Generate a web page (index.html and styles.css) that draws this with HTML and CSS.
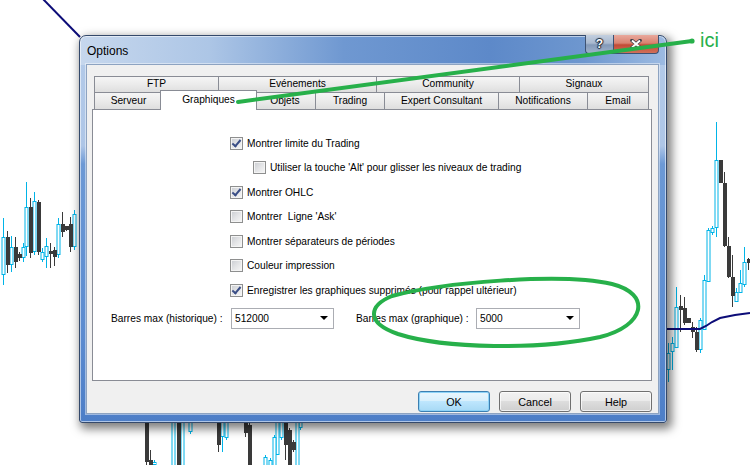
FILE: index.html
```html
<!DOCTYPE html>
<html lang="fr">
<head>
  <meta charset="UTF-8" />
  <title>Options</title>
  <link rel="stylesheet" href="styles.css">
</head>
<body>

  <svg class="chart" id="chart" width="750" height="465" viewBox="0 0 750 465">
    <path class="ma" d="M42 -2 L80 37" />
    <path class="ma" d="M664 329 L700 329 L706 326 L712 322 L720 318 L735 315 L750 313" />
  </svg>

  <div class="window">
    <div class="titlebar">
      <span class="title">Options</span>
      <div class="caption-btns">
        <span class="cbtn help">?</span>
        <span class="cbtn close">
          <svg width="12" height="10" viewBox="0 0 12 10">
            <path d="M2 1.5 L10 8.5 M10 1.5 L2 8.5" stroke="#3a3f4a" stroke-width="3.6" stroke-linecap="round"/>
            <path d="M2 1.5 L10 8.5 M10 1.5 L2 8.5" stroke="#fff" stroke-width="2"/>
          </svg>
        </span>
      </div>
    </div>

    <div class="client">
      <div class="tabs">
        <div class="tab-row back">
          <div class="tab w-ftp">FTP</div>
          <div class="tab w-events">Evénements</div>
          <div class="tab w-community">Community</div>
          <div class="tab w-signals">Signaux</div>
        </div>
        <div class="tab-row front">
          <div class="tab w-server">Serveur</div>
          <div class="tab w-charts selected">Graphiques</div>
          <div class="tab w-objects">Objets</div>
          <div class="tab w-trading">Trading</div>
          <div class="tab w-expert">Expert Consultant</div>
          <div class="tab w-notif">Notifications</div>
          <div class="tab w-email">Email</div>
        </div>
      </div>

      <div class="panel">
        <div class="checks">
          <div class="check on"><span class="box"></span>Montrer limite du Trading</div>
          <div class="check sub"><span class="box"></span>Utiliser la touche 'Alt' pour glisser les niveaux de trading</div>
          <div class="check on"><span class="box"></span>Montrer OHLC</div>
          <div class="check"><span class="box"></span>Montrer&nbsp; Ligne 'Ask'</div>
          <div class="check"><span class="box"></span>Montrer séparateurs de périodes</div>
          <div class="check"><span class="box"></span>Couleur impression</div>
          <div class="check on"><span class="box"></span>Enregistrer les graphiques supprimés (pour rappel ultérieur)</div>
        </div>

        <div class="limits">
          <span class="limit-label">Barres max (historique) :</span>
          <div class="combo w-hist"><span>512000</span><i class="arrow"></i></div>
          <span class="limit-label second">Barres max (graphique) :</span>
          <div class="combo w-chart"><span>5000</span><i class="arrow"></i></div>
        </div>
      </div>

      <div class="buttons">
        <button class="btn default">OK</button>
        <button class="btn">Cancel</button>
        <button class="btn">Help</button>
      </div>
    </div>
  </div>

  <svg class="marks" width="750" height="465" viewBox="0 0 750 465">
    <line x1="238" y1="102" x2="692" y2="41" />
    <circle cx="692" cy="41" r="2.6" />
    <path d="M392 296 C 440 283, 560 272, 612 284 C 652 294, 645 326, 600 337 C 540 350, 445 349, 398 334 C 366 323, 368 306, 392 296" />
  </svg>
  <span class="note">ici</span>

  <script>
    // x, haut, bas, corps haut, corps bas, hausse
    const candles = [
      [3,218,285,237,275,1],[7,231,273,237,265,0],[11,236,272,247,265,1],[15,237,268,247,262,0],
      [19,252,261,254,258,0],[23,243,262,247,258,1],[26,182,256,207,247,1],[30,198,258,207,253,0],
      [34,192,255,201,252,1],[38,200,255,202,252,0],[42,248,262,252,260,1],[46,238,268,246,257,1],
      [50,243,268,251,254,0],[54,247,266,250,257,0],[58,218,258,224,255,1],[62,212,237,224,232,0],
      [66,226,231,226,230,0],[70,217,252,224,247,0],[74,210,250,214,247,1],

      [668,343,382,353,370,1],[672,337,370,343,352,1],[676,287,348,307,348,1],[680,295,332,306,310,0],
      [684,297,325,308,323,0],[688,318,323,318,323,0],[692,322,338,327,332,0],[696,327,352,332,350,0],
      [700,318,353,320,350,1],[704,275,330,280,330,1],[708,228,282,230,282,1],[712,226,235,228,233,1],
      [716,122,237,160,228,1],[720,160,183,160,183,0],[724,172,247,183,246,0],[728,237,278,246,277,0],
      [732,255,307,277,296,0],[736,288,302,292,302,1],[740,270,293,283,293,1],[744,247,287,262,285,1],
      [748,258,270,259,263,0],

      [146,420,465,420,462,0],[150,450,465,460,465,0],[154,460,465,462,465,1],[173,420,465,420,470,1],
      [178,420,465,420,470,0],[182,420,465,420,470,1],[190,420,434,420,432,1],[218,420,452,420,445,0],
      [222,420,452,420,437,1],[226,420,440,420,438,1],[245,420,437,420,433,0],[249,420,465,425,470,0],
      [265,455,465,457,470,1],[270,458,465,460,470,1],[274,435,465,437,470,1],[277,420,455,420,455,1],
      [281,420,440,420,438,1],[285,420,460,420,445,0],[289,428,465,430,470,0],[293,440,452,442,450,0],
      [297,420,465,420,470,1],[300,420,430,420,428,1]
    ];

    const chart = document.getElementById("chart");
    const ns = "http://www.w3.org/2000/svg";

    candles.forEach(c => {
      const [x, hi, lo, top, bot, up] = c;
      const wick = document.createElementNS(ns, "line");
      wick.setAttribute("x1", x + 0.5);
      wick.setAttribute("x2", x + 0.5);
      wick.setAttribute("y1", hi);
      wick.setAttribute("y2", lo);
      wick.setAttribute("class", up ? "up" : "down");
      chart.insertBefore(wick, chart.firstChild);

      const body = document.createElementNS(ns, "rect");
      if (up) {
        body.setAttribute("x", x - 1);
        body.setAttribute("width", 3);
        body.setAttribute("y", top + 0.5);
        body.setAttribute("height", Math.max(bot - top - 1, 1));
        body.setAttribute("class", "up-body");
      } else {
        body.setAttribute("x", x - 1);
        body.setAttribute("width", 4);
        body.setAttribute("y", top);
        body.setAttribute("height", Math.max(bot - top, 2));
        body.setAttribute("class", "down-body");
      }
      chart.insertBefore(body, wick.nextSibling);
    });
  </script>
</body>
</html>
```

FILE: styles.css
```css
* {
  box-sizing: border-box;
}

body {
  margin: 0;
  width: 750px;
  height: 465px;
  overflow: hidden;
  position: relative;
  background: #fff;
  font-family: 'Liberation Sans', Arial, sans-serif;
  font-size: 10.2px;
  color: #000;
}

/* graphique en fond */
.chart {
  position: absolute;
  left: 0;
  top: 0;
}

.chart .up {
  stroke: #00b4e8;
  stroke-width: 1;
}

.chart .down {
  stroke: #3a3a3a;
  stroke-width: 1;
}

.chart .up-body {
  fill: #fff;
  stroke: #00b4e8;
  stroke-width: 1;
}

.chart .down-body {
  fill: #3a3a3a;
}

.chart .ma {
  fill: none;
  stroke: #0c0c78;
  stroke-width: 2;
}

/* fenêtre */
.window {
  position: absolute;
  left: 79px;
  top: 35px;
  width: 588px;
  height: 388px;
  padding: 0 7px 8px 6px;
  border: 1px solid #34496b;
  border-radius: 7px 7px 3px 3px;
  background:
    linear-gradient(90deg, #c6d7ed 0%, #adc6e6 22%, #6f98d1 45%, #5d89c9 70%, #6e97cf 86%, #9dbbe2 100%) top / 100% 29px no-repeat,
    linear-gradient(180deg, #b4cbe9 0, #aec6e7 110px, #6c99d5 128px, #5b8bd0 300px, #4d7ec7 100%);
  box-shadow: inset 0 0 0 1px rgba(255,255,255,0.55), 3px 4px 10px 2px rgba(0,0,0,0.5);
}

.titlebar {
  height: 28px;
  display: flex;
  justify-content: space-between;
  align-items: center;
}

.title {
  font-size: 12px;
  padding-left: 1px;
  padding-top: 1px;
}

.caption-btns {
  align-self: flex-start;
  display: flex;
  margin-top: -1px;
}

.cbtn {
  height: 19px;
  display: flex;
  align-items: center;
  justify-content: center;
  border: 1px solid #3d5273;
  border-top: none;
}

.cbtn.help {
  width: 28px;
  border-radius: 0 0 0 4px;
  border-right: none;
  background: linear-gradient(180deg, #c3cfdf 0%, #a9b9cf 45%, #8399b8 55%, #9fb2cc 100%);
  color: #fff;
  font-weight: bold;
  font-size: 12px;
  text-shadow: 0 0 1px #1f2836, 1px 0 1px #1f2836, -1px 0 1px #1f2836, 0 1px 1px #1f2836, 0 -1px 1px #1f2836;
}

.cbtn.close {
  width: 46px;
  border-radius: 0 0 4px 0;
  background: linear-gradient(180deg, #e9a99d 0%, #d98270 45%, #c24a35 55%, #d1705a 100%);
}

.client {
  height: 350px;
  border: 1px solid #8da3c1;
  background: #f0f0f0;
  padding: 11px 0 0 5px;
  box-shadow: 0 0 0 1px rgba(255,255,255,0.45);
}

/* onglets */
.tabs {
  margin-left: 2px;
  width: 556px;
}

.tab-row {
  display: flex;
  align-items: flex-start;
}

.tab {
  border: 1px solid #898c95;
  border-bottom: none;
  background: linear-gradient(180deg, #f5f5f5 0%, #ebebeb 50%, #dedede 100%);
  text-align: center;
  white-space: nowrap;
  margin-left: -1px;
}

.tab:first-child {
  margin-left: 0;
}

.back .tab {
  height: 16px;
  line-height: 13px;
}

.front {
  height: 19px;
  margin-top: -2px;
  position: relative;
  z-index: 2;
}

.front .tab {
  height: 17px;
  margin-top: 2px;
  line-height: 16px;
}

.front .tab.selected {
  height: 20px;
  margin-top: 0;
  margin-left: -3px;
  margin-right: -2px;
  line-height: 17px;
  background: #fff;
  position: relative;
  z-index: 3;
}

.w-ftp { width: 125px; }
.w-events { width: 159px; }
.w-community { width: 144px; }
.w-signals { width: 130px; }

.w-server { width: 69px; }
.w-charts { width: 97px; }
.w-objects { width: 62px; }
.w-trading { width: 70px; }
.w-expert { width: 115px; }
.w-notif { width: 90px; }
.w-email { width: 62px; }

.panel {
  width: 560px;
  height: 272px;
  border: 1px solid #898c95;
  background: #fff;
  position: relative;
  z-index: 1;
}

.checks {
  padding: 21px 0 0 137px;
}

.check {
  height: 24.5px;
  display: flex;
  align-items: center;
  gap: 4px;
  white-space: nowrap;
}

.check.sub {
  padding-left: 23px;
}

.box {
  width: 13px;
  height: 13px;
  border: 1px solid #8e8f8f;
  background: linear-gradient(135deg, #c9ccd1 0%, #e3e4e6 50%, #f7f7f7 100%);
  box-shadow: inset 0 0 0 1px #f4f4f4;
  flex-shrink: 0;
  position: relative;
}

.check.on .box::after {
  content: '';
  position: absolute;
  left: 3px;
  top: 0px;
  width: 3px;
  height: 7px;
  border: solid #3a4e86;
  border-width: 0 2px 2px 0;
  transform: rotate(40deg);
}

.limits {
  display: flex;
  align-items: center;
  padding-left: 18px;
  margin-top: 5px;
}

.limit-label {
  width: 120px;
  white-space: nowrap;
}

.limit-label.second {
  margin-left: 22px;
}

.combo {
  height: 21px;
  border: 1px solid #abadb3;
  background: #fff;
  display: flex;
  align-items: center;
  justify-content: space-between;
  padding: 0 5px 0 3px;
}

.w-hist { width: 103px; }
.w-chart { width: 104px; }

.arrow {
  width: 0;
  height: 0;
  border-left: 4px solid transparent;
  border-right: 4px solid transparent;
  border-top: 4px solid #000;
}

/* boutons */
.buttons {
  width: 560px;
  margin-top: 10px;
  display: flex;
  justify-content: flex-end;
  gap: 9px;
}

.btn {
  width: 72px;
  height: 21px;
  padding: 0;
  border: 1px solid #707070;
  border-radius: 3px;
  background: linear-gradient(180deg, #f2f2f2 0%, #ebebeb 45%, #dddddd 50%, #cfcfcf 100%);
  box-shadow: inset 0 0 0 1px rgba(255,255,255,0.7);
  font-family: 'Liberation Sans', Arial, sans-serif;
  font-size: 10.8px;
  color: #000;
}

.btn.default {
  border-color: #3c7fb1;
  background: linear-gradient(180deg, #eaf6fd 0%, #d9f0fc 45%, #bee6fd 50%, #a7d9f5 100%);
  box-shadow: inset 0 0 0 1px #8ed3f7;
}

/* annotations */
.marks {
  position: absolute;
  left: 0;
  top: 0;
  z-index: 5;
  fill: none;
  stroke: #27b04a;
  stroke-width: 4;
  stroke-linecap: round;
}

.marks circle {
  fill: #27b04a;
  stroke: none;
}

.note {
  position: absolute;
  left: 700px;
  top: 29px;
  z-index: 5;
  font-size: 20px;
  color: #27b04a;
}
```
